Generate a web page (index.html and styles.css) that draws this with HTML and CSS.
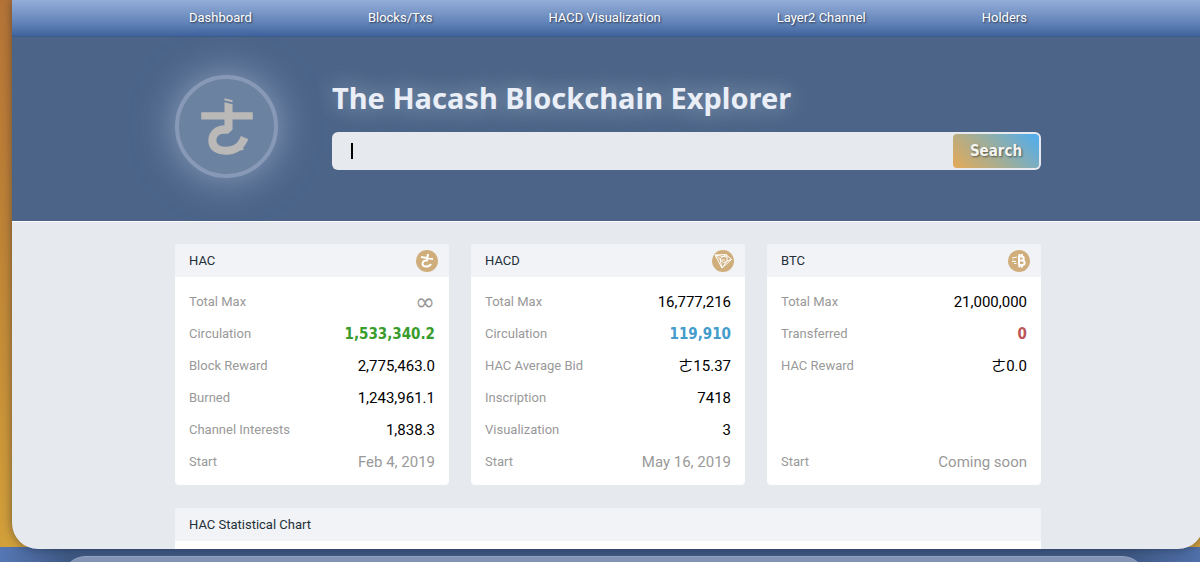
FILE: index.html
```html
<!DOCTYPE html>
<html lang="en">

<head>
    <meta charset="UTF-8">
    <meta name="viewport" content="width=device-width, initial-scale=1.0">
    <title>Hacash Explorer</title>
    <link rel="stylesheet" href="styles.css">
</head>

<body>

    <div class="window">
        <nav class="nav">
            <div class="container nav-links">
                <a href="#">Dashboard</a>
                <a href="#">Blocks/Txs</a>
                <a href="#">HACD Visualization</a>
                <a href="#">Layer2 Channel</a>
                <a href="#">Holders</a>
            </div>
        </nav>

        <header class="hero">
            <div class="container hero-inner">
                <div class="logo">
                    <svg viewBox="0 0 94 94" aria-hidden="true">
                        <path class="logo-fill" d="M45 19l8 2v2l-8-2z" />
                        <path class="logo-fill" d="M45 23l8 2v8h20v7H53v10l-4 4h-8v-1l4-3V40H22v-7h23z" />
                        <path class="logo-line" d="M48 50C38 49 33 54 33 61C33 68 39 71 47 71C56 71 61 67 65 58" />
                        <path class="logo-fill" d="M59 64l4 1 1 5-4 1z" />
                    </svg>
                </div>
                <div class="hero-main">
                    <h1>The Hacash Blockchain Explorer</h1>
                    <form class="search">
                        <input type="text" class="search-input" aria-label="Search">
                        <button type="submit" class="search-button">Search</button>
                    </form>
                </div>
            </div>
        </header>

        <main class="content">
            <div class="container">
                <div class="cards">
                    <section class="card">
                        <div class="card-head">
                            <h2>HAC</h2>
                            <svg class="coin" viewBox="0 0 22 22" aria-hidden="true">
                                <circle cx="11" cy="11" r="11" />
                                <path class="coin-thick" d="M12 4l-1 6.500c-3-.3-4.500 1-4.500 3.300 0 3.700 6.500 3.700 8.500.2M5 7l12 2" />
                            </svg>
                        </div>
                        <table class="stats">
                            <tr><th>Total Max</th><td class="muted infinity">∞</td></tr>
                            <tr><th>Circulation</th><td class="green">1,533,340.2</td></tr>
                            <tr><th>Block Reward</th><td>2,775,463.0</td></tr>
                            <tr><th>Burned</th><td>1,243,961.1</td></tr>
                            <tr><th>Channel Interests</th><td>1,838.3</td></tr>
                            <tr><th>Start</th><td class="muted">Feb 4, 2019</td></tr>
                        </table>
                    </section>

                    <section class="card">
                        <div class="card-head">
                            <h2>HACD</h2>
                            <svg class="coin" viewBox="0 0 22 22" aria-hidden="true">
                                <circle cx="11" cy="11" r="11" />
                                <path class="coin-thin" d="M3 5l11-.5L19.500 9.500 10 18zM3 5l5 4 2 9 5-7 4.500-1.500M8 9l3-2.500 4 .5v4l-3.500 2zM3 5l8 1.500L14 4.500l1 2.500M10 10h3" />
                            </svg>
                        </div>
                        <table class="stats">
                            <tr><th>Total Max</th><td>16,777,216</td></tr>
                            <tr><th>Circulation</th><td class="blue">119,910</td></tr>
                            <tr><th>HAC Average Bid</th><td>ㄜ15.37</td></tr>
                            <tr><th>Inscription</th><td>7418</td></tr>
                            <tr><th>Visualization</th><td>3</td></tr>
                            <tr><th>Start</th><td class="muted">May 16, 2019</td></tr>
                        </table>
                    </section>

                    <section class="card">
                        <div class="card-head">
                            <h2>BTC</h2>
                            <svg class="coin" viewBox="0 0 22 22" aria-hidden="true">
                                <circle cx="11" cy="11" r="11" />
                                <path class="coin-thick" d="M11 6.500h2.500c3 0 3 4 0 4H11zM11 10.500h3c3.500 0 3.500 4.500 0 4.500h-3.500M11 6v9.500M11.500 4v2M14 4v2M11.500 15.500v2M14 15.500v2" />
                                <path class="coin-thin" d="M4 8l5-1M6 10.500l-1-1M4 11.500h4M6 13.500h2.500" />
                            </svg>
                        </div>
                        <table class="stats">
                            <tr><th>Total Max</th><td>21,000,000</td></tr>
                            <tr><th>Transferred</th><td class="red">0</td></tr>
                            <tr><th>HAC Reward</th><td>ㄜ0.0</td></tr>
                            <tr><th></th><td></td></tr>
                            <tr><th></th><td></td></tr>
                            <tr><th>Start</th><td class="muted">Coming soon</td></tr>
                        </table>
                    </section>
                </div>

                <section class="card chart">
                    <div class="card-head">
                        <h2>HAC Statistical Chart</h2>
                    </div>
                    <div class="chart-body"></div>
                </section>
            </div>
        </main>
    </div>

    <div class="shelf">
        <div class="shelf-panel"></div>
    </div>

</body>

</html>
```

FILE: styles.css
```css
* {
    box-sizing: border-box;
}

body {
    margin: 0;
    height: 100vh;
    display: flex;
    flex-direction: column;
    overflow: hidden;
    font-family: Roboto, "Noto Sans CJK TC", sans-serif;
    font-size: 13px;
    background:
        linear-gradient(90deg, #5577b4, #3e5883 70px, #3e5883 94%, #5070aa) bottom / 100% 15px no-repeat,
        linear-gradient(#b57437, #bd8036 35%, #d3a13a);
}

.window {
    flex: 1;
    min-height: 0;
    margin: 0 -4px 0 12px;
    overflow: hidden;
    background: #e6e9ee;
    border-radius: 0 0 26px 26px;
    box-shadow: 0 0 10px rgba(20, 30, 50, 0.5);
}

.container {
    width: 100%;
    max-width: 866px;
    margin: 0 auto;
}

/* top nav */
.nav {
    background: linear-gradient(#93add8, #6586ba 60%, #3f639d);
    border-bottom: 1px solid #3c5b88;
}

.nav-links {
    display: flex;
    justify-content: space-between;
    padding: 0 14px;
}

.nav a {
    color: #fff;
    line-height: 36px;
    text-decoration: none;
    text-shadow: 1px 1px 2px rgba(0, 0, 0, 0.6);
}

/* search area */
.hero {
    padding: 38px 0 43px;
    background: #4b6488;
}

.hero-inner {
    display: flex;
    gap: 54px;
}

.logo {
    flex: none;
    width: 103px;
    height: 103px;
    border: 4px solid #8799b6;
    border-radius: 50%;
    background: #6c82a1;
    box-shadow: 0 0 40px rgba(190, 205, 230, 0.6);
}

.logo svg {
    display: block;
}

.logo-fill {
    fill: #bab9b8;
}

.logo-line {
    fill: none;
    stroke: #bab9b8;
    stroke-width: 8;
}

.hero-main {
    flex: 1;
}

h1 {
    margin: 5px 0 16px;
    color: #e9eef7;
    font-family: "Noto Sans", sans-serif;
    font-size: 29px;
    line-height: 36px;
    white-space: nowrap;
    text-shadow: 0 0 24px rgba(200, 215, 225, 0.7);
}

.search {
    display: flex;
    padding: 2px;
    border-radius: 6px;
    background: #e6e9ee;
}

.search-input {
    flex: 1;
    min-width: 0;
    height: 34px;
    padding: 0 18px;
    border: none;
    outline: none;
    font: inherit;
    font-size: 15px;
    caret-color: transparent;
    background: linear-gradient(#000, #000) 17px center / 2px 16px no-repeat;
}

.search-button {
    width: 86px;
    border: none;
    border-radius: 4px;
    color: #f4f4f0;
    font-family: "DejaVu Sans Condensed", "DejaVu Sans", sans-serif;
    font-size: 15px;
    font-weight: bold;
    text-shadow: 1px 1px 2px rgba(0, 0, 0, 0.5);
    background: linear-gradient(45deg, #e5a956, #a3ae96 45%, #4dadf2);
    cursor: pointer;
}

/* cards */
.content {
    padding-top: 22px;
    border-top: 1px solid #fff;
}

.cards {
    display: grid;
    grid-template-columns: repeat(3, 1fr);
    gap: 22px;
}

.card {
    overflow: hidden;
    border-radius: 4px;
    background: #fff;
}

.card-head {
    display: flex;
    align-items: center;
    justify-content: space-between;
    height: 33px;
    padding: 0 11px 0 14px;
    background: #f2f3f7;
}

h2 {
    margin: 0;
    color: #233038;
    font-size: 13px;
    font-weight: normal;
}

.coin {
    width: 22px;
    height: 22px;
    fill: #d0ae7b;
}

.coin-thick,
.coin-thin {
    fill: none;
    stroke: #fff;
    stroke-width: 2;
}

.coin-thin {
    stroke-width: 1;
}

.stats {
    width: 100%;
    padding: 9px 14px 7px;
    border-spacing: 0;
}

.stats th,
.stats td {
    height: 32px;
    padding: 0;
    line-height: 20px;
}

.stats th {
    color: #999;
    font-weight: normal;
    text-align: left;
}

.stats td {
    color: #000;
    font-size: 15px;
    text-align: right;
}

.stats .muted {
    color: #999;
}

.stats .infinity {
    font-family: "DejaVu Sans", sans-serif;
    font-size: 24px;
}

.stats .green,
.stats .blue,
.stats .red {
    font-family: "DejaVu Sans Condensed", "DejaVu Sans", sans-serif;
    font-weight: bold;
}

.stats .green {
    color: #399c2c;
}

.stats .blue {
    color: #439ccb;
}

.stats .red {
    color: #bd5657;
}

.chart {
    margin-top: 23px;
}

.chart-body {
    height: 300px;
}

/* strip of the desktop under the window */
.shelf {
    height: 13px;
    padding: 7px 54px 0 62px;
    overflow: hidden;
}

.shelf-panel {
    height: 60px;
    border-top: 1px solid #93a2c1;
    border-radius: 24px 24px 0 0;
    background: #8393b5;
}
```
